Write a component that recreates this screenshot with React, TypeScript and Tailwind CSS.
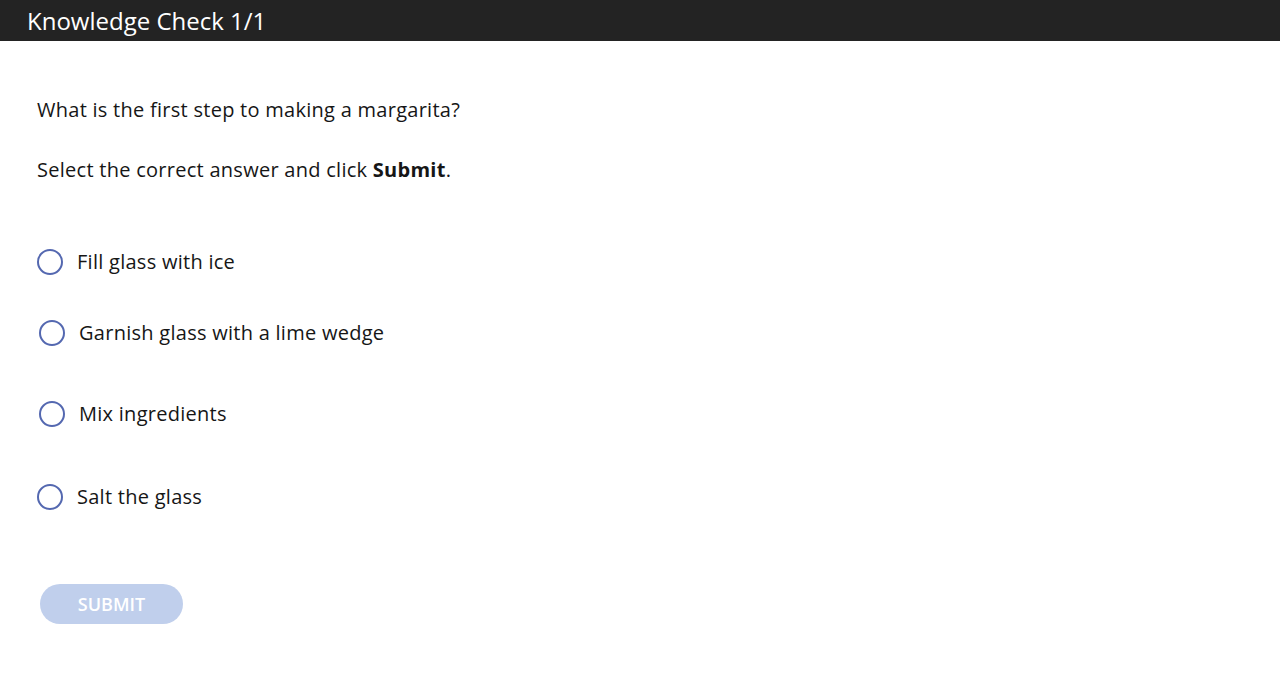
import React from 'react';

const options = [
  { label: 'Fill glass with ice', mt: 'mt-[64px]', shift: '' },
  { label: 'Garnish glass with a lime wedge', mt: 'mt-[43px]', shift: 'ml-[2px]' },
  { label: 'Mix ingredients', mt: 'mt-[53px]', shift: 'ml-[2px]' },
  { label: 'Salt the glass', mt: 'mt-[55px]', shift: '' },
];

const App = () => {
  return (
    <div className="min-h-[680px] bg-white text-[#161616] font-['Open_Sans',sans-serif]">
      <header className="h-[41px] bg-[#232323] flex items-center px-[27px]">
        <h1 className="text-white text-[24px] leading-none">Knowledge Check 1/1</h1>
      </header>

      <main className="pl-[37px] pt-[55px] text-[20px] tracking-[0.27px]">
        <p className="leading-[28px]">What is the first step to making a margarita?</p>
        <p className="mt-[32px] leading-[28px]">
          Select the correct answer and click <span className="font-bold">Submit</span>.
        </p>

        <div className="flex flex-col">
          {options.map((o) => (
            <label key={o.label} className={`flex items-center gap-[14px] h-[28px] cursor-pointer ${o.mt} ${o.shift}`}>
              <span className="w-[26px] h-[26px] rounded-full border-2 border-[#5468b0] shrink-0" />
              <span>{o.label}</span>
            </label>
          ))}
        </div>

        <button className="mt-[73px] ml-[3px] w-[143px] h-[40px] rounded-full bg-[#c0cfec] text-white text-[18px] font-semibold tracking-normal">
          SUBMIT
        </button>
      </main>
    </div>
  );
};

export default App;
